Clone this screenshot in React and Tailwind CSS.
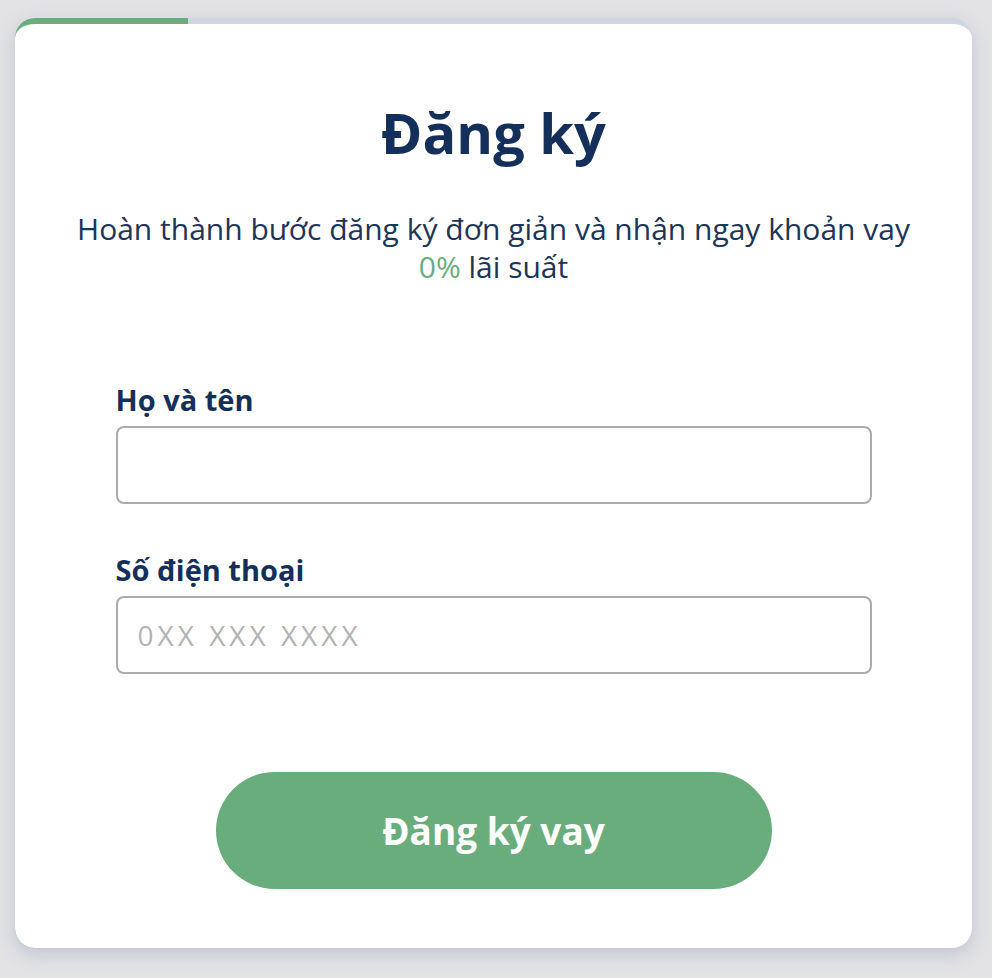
export default function App() {
  return (
    <div className="min-h-[978px] bg-[#e3e3e5] pt-[18px] pb-[30px] pl-[15px] pr-[20px] font-['Open_Sans','Noto_Sans',sans-serif]">
      <div className="rounded-[20px] border-t-[6px] border-transparent shadow-[0_6px_18px_rgba(150,160,190,0.45)] [background:linear-gradient(#fff,#fff)_padding-box,linear-gradient(to_right,#6aad7c_173px,#cfd6e0_173px)_border-box]">
        <div className="flex h-[924px] flex-col items-center px-[40px] pt-[76px]">
          <h1 className="text-[56px] font-bold leading-[64px] text-[#14305a]">Đăng ký</h1>
          <p className="mt-[46px] text-center text-[30px] leading-[38px] text-[#1d3557]">
            Hoàn thành bước đăng ký đơn giản và nhận ngay khoản vay
            <br />
            <span className="text-[#6aad7c]">0%</span> lãi suất
          </p>

          <form className="mt-[98px] flex w-[756px] flex-col">
            <label className="text-[29px] font-bold leading-[32px] text-[#14305a]">Họ và tên</label>
            <input
              type="text"
              className="mt-[10px] h-[78px] rounded-[8px] border-2 border-[#ababab] px-[20px] text-[28px] outline-none"
            />
            <label className="mt-[50px] text-[29px] font-bold leading-[32px] text-[#14305a]">Số điện thoại</label>
            <input
              type="tel"
              placeholder="0XX XXX XXXX"
              className="mt-[10px] h-[78px] rounded-[8px] border-2 border-[#ababab] px-[20px] text-[28px] tracking-[4px] outline-none placeholder:text-[#b3b3b3]"
            />
            <button
              type="button"
              className="mx-auto mt-[98px] h-[117px] w-[556px] rounded-full bg-[#6aad7c] text-[37px] font-bold text-white"
            >
              Đăng ký vay
            </button>
          </form>
        </div>
      </div>
    </div>
  )
}
